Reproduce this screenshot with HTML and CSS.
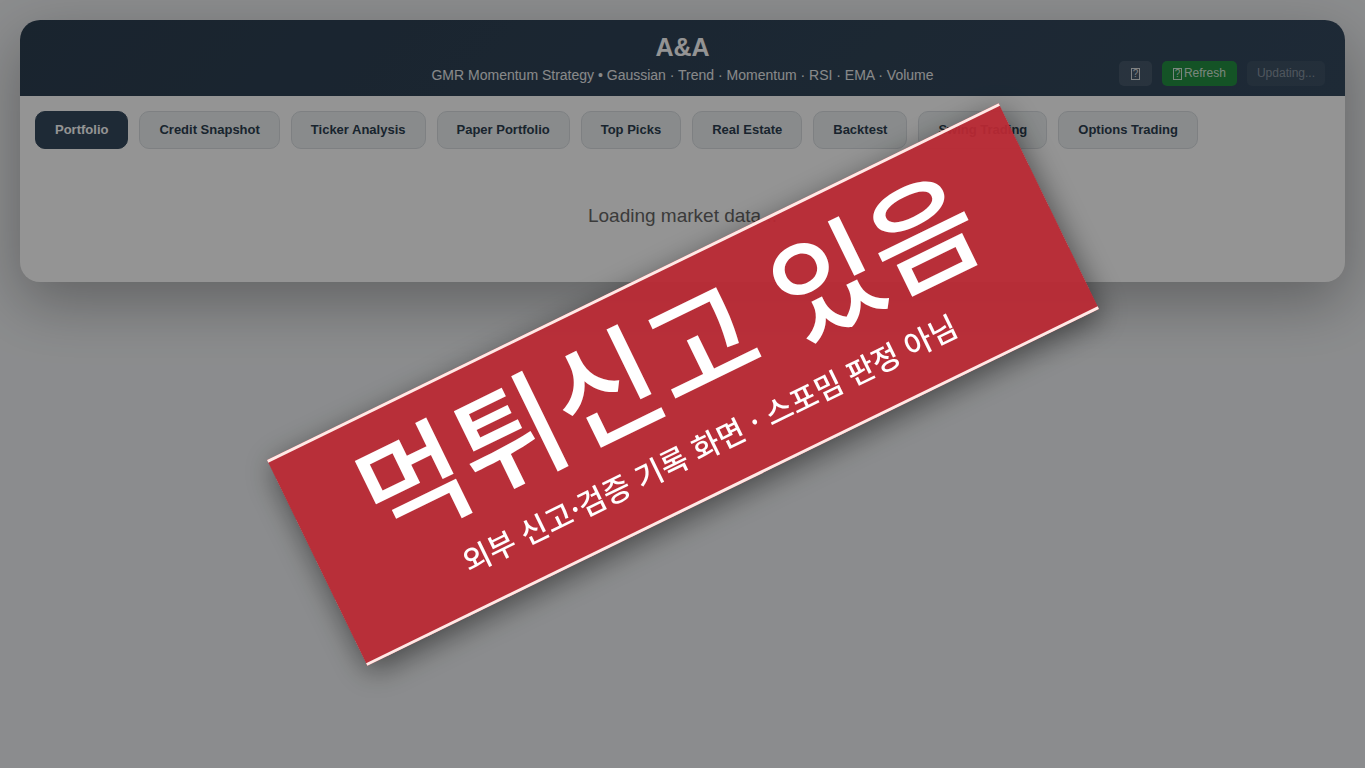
FILE: index.html
```
<!DOCTYPE html>
<html lang="en">
<head>
    <meta charset="UTF-8">
    <meta name="viewport" content="width=device-width, initial-scale=1.0">
    <title>A&amp;A</title>
    <link rel="stylesheet" href="styles.css">
</head>
<body>
    <div class="container">
        <header class="header">
            <h1>A&amp;A</h1>
            <p class="subtitle">GMR Momentum Strategy • Gaussian · Trend · Momentum · RSI · EMA · Volume</p>
            <div class="header-controls">
                <button type="button" class="control-btn" aria-label="Theme"><span class="glyph">?</span></button>
                <button type="button" class="control-btn refresh"><span class="glyph">?</span>Refresh</button>
                <span class="status">Updating...</span>
            </div>
        </header>
        <nav class="tabs">
            <button type="button" class="tab active">Portfolio</button>
            <button type="button" class="tab">Credit Snapshot</button>
            <button type="button" class="tab">Ticker Analysis</button>
            <button type="button" class="tab">Paper Portfolio</button>
            <button type="button" class="tab">Top Picks</button>
            <button type="button" class="tab">Real Estate</button>
            <button type="button" class="tab">Backtest</button>
            <button type="button" class="tab">Swing Trading</button>
            <button type="button" class="tab">Options Trading</button>
        </nav>
        <main class="content">
            <div class="loading">Loading market data...</div>
        </main>
    </div>

    <div class="overlay">
        <div class="banner" lang="ko">
            <div class="banner-title">먹튀신고 있음</div>
            <div class="banner-note">외부 신고·검증 기록 화면 · 스포밈 판정 아님</div>
        </div>
    </div>
</body>
</html>
```
FILE: styles.css
```
* {
    box-sizing: border-box;
}

body {
    font-family: "Liberation Sans", Arial, sans-serif;
    margin: 0;
    padding: 20px;
    min-height: 100vh;
    background-color: #f0f2f4;
}

.container {
    background: #fff;
    border-radius: 20px;
    box-shadow: 0 20px 60px rgba(0, 0, 0, 0.3);
    overflow: hidden;
}

.header {
    position: relative;
    padding: 12px 20px;
    text-align: center;
    color: #fff;
    background: linear-gradient(135deg, #2c3e50, #34495e);
}

.header h1 {
    margin: 0 0 5px;
    font-size: 25px;
    line-height: 30px;
}

.subtitle {
    margin: 0;
    font-size: 14px;
    line-height: 17px;
    opacity: 0.9;
}

.header-controls {
    position: absolute;
    right: 20px;
    bottom: 10px;
    display: flex;
    align-items: center;
    gap: 10px;
}

.control-btn,
.status {
    display: flex;
    align-items: center;
    gap: 2px;
    height: 25px;
    padding: 0 10px;
    border: 0;
    border-radius: 5px;
    font-family: inherit;
    font-size: 12px;
    line-height: 25px;
    color: rgba(255, 255, 255, 0.8);
    background: rgba(255, 255, 255, 0.1);
}

.control-btn {
    padding: 0 12px;
}

.refresh {
    padding: 0 11px;
    background: #248f43;
}

.status {
    color: rgba(255, 255, 255, 0.4);
    background: rgba(255, 255, 255, 0.05);
}

.glyph {
    width: 9px;
    height: 12px;
    border: 1px solid;
    font-size: 10px;
    line-height: 10px;
    text-align: center;
}

.tabs {
    display: flex;
    flex-wrap: wrap;
    gap: 11px;
    padding: 15px;
}

.tab {
    padding: 10px 19px;
    border: 1px solid #d9dde1;
    border-radius: 10px;
    font-family: inherit;
    font-size: 13px;
    font-weight: bold;
    line-height: 16px;
    color: #2c3e50;
    background: #ecf0f1;
}

.tab.active {
    color: #fff;
    border-color: #34495e;
    background: #34495e;
}

.content {
    padding: 0 15px 15px;
}

.loading {
    padding: 40px;
    font-size: 19px;
    line-height: 23px;
    text-align: center;
    color: #666;
}

/* dimmed layer with the rotated notice */
.overlay {
    position: fixed;
    inset: 0;
    display: flex;
    align-items: center;
    justify-content: center;
    overflow: hidden;
    background: rgba(0, 0, 0, 0.42);
}

.banner {
    flex: none;
    width: 814px;
    height: 229px;
    padding: 6px 4px 0 0;
    border-top: 3px solid #ffe9e6;
    border-bottom: 3px solid #ffe9e6;
    font-family: "Noto Sans CJK KR", sans-serif;
    font-weight: 500;
    text-align: center;
    white-space: nowrap;
    color: #fff;
    background: rgba(186, 40, 51, 0.94);
    box-shadow: 0 8px 30px rgba(0, 0, 0, 0.5);
    transform: rotate(-26deg);
}

.banner-title {
    font-size: 116px;
    line-height: 136px;
}

.banner-note {
    margin-top: 14px;
    font-size: 30px;
    line-height: 38px;
}
```
